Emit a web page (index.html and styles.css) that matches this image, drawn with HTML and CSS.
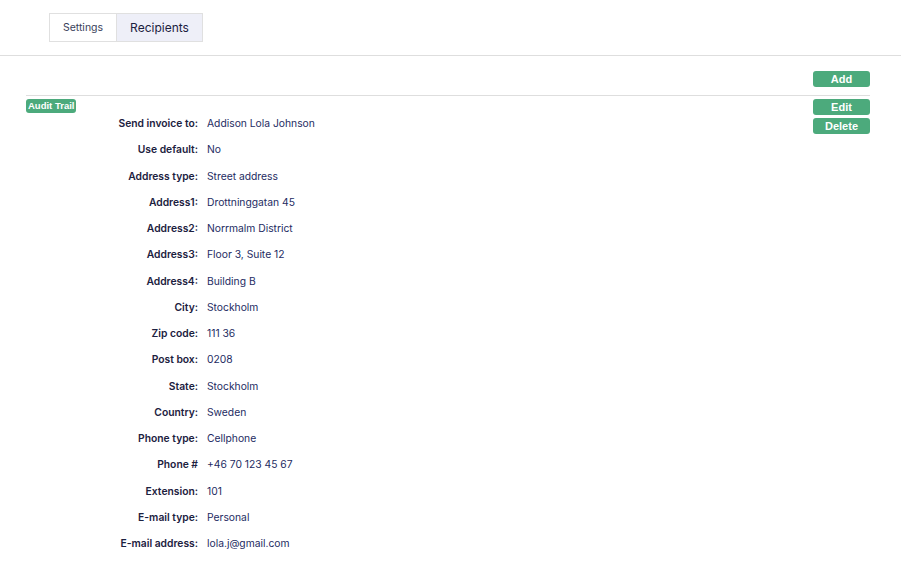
FILE: index.html
```html
<!DOCTYPE html>
<html lang="en">
<head>
<meta charset="UTF-8">
<title>Recipients</title>
<link rel="stylesheet" href="styles.css">
</head>
<body>
    <div class="tabs-bar">
        <div class="tabs">
            <div class="tab">Settings</div>
            <div class="tab active">Recipients</div>
        </div>
    </div>

    <div class="content">
        <div class="toolbar">
            <button type="button" class="btn">Add</button>
        </div>

        <div class="record">
            <div class="record-main">
                <span class="badge">Audit Trail</span>
                <dl class="details">
                    <dt>Send invoice to:</dt><dd>Addison Lola Johnson</dd>
                    <dt>Use default:</dt><dd>No</dd>
                    <dt>Address type:</dt><dd>Street address</dd>
                    <dt>Address1:</dt><dd>Drottninggatan 45</dd>
                    <dt>Address2:</dt><dd>Norrmalm District</dd>
                    <dt>Address3:</dt><dd>Floor 3, Suite 12</dd>
                    <dt>Address4:</dt><dd>Building B</dd>
                    <dt>City:</dt><dd>Stockholm</dd>
                    <dt>Zip code:</dt><dd>111 36</dd>
                    <dt>Post box:</dt><dd>0208</dd>
                    <dt>State:</dt><dd>Stockholm</dd>
                    <dt>Country:</dt><dd>Sweden</dd>
                    <dt>Phone type:</dt><dd>Cellphone</dd>
                    <dt>Phone #</dt><dd>+46 70 123 45 67</dd>
                    <dt>Extension:</dt><dd>101</dd>
                    <dt>E-mail type:</dt><dd>Personal</dd>
                    <dt>E-mail address:</dt><dd>lola.j@gmail.com</dd>
                </dl>
            </div>
            <div class="record-actions">
                <button type="button" class="btn">Edit</button>
                <button type="button" class="btn">Delete</button>
            </div>
        </div>
    </div>
</body>
</html>
```

FILE: styles.css
```css
body {
    margin: 0;
    background: #fff;
    font-family: Inter, "Noto Sans", sans-serif;
    color: #1c2140;
}

.tabs-bar {
    height: 56px;
    border-bottom: 1px solid #dedede;
    box-sizing: border-box;
    padding: 13px 0 0 49px;
}

.tabs {
    display: flex;
    height: 29px;
    width: 154px;
    border: 1px solid #e0e0e0;
    box-sizing: border-box;
}

.tab {
    display: flex;
    align-items: center;
    justify-content: center;
    font-size: 10.5px;
    color: #3a3f5c;
    width: 66px;
}

.tab.active {
    flex: 1;
    background: #eeeff8;
    border-left: 1px solid #e0e0e0;
    font-size: 12px;
    color: #1c2140;
}

.content {
    padding: 15px 31px 0 26px;
}

.toolbar {
    display: flex;
    justify-content: flex-end;
    padding-bottom: 8px;
    border-bottom: 1px solid #dedede;
}

.btn {
    width: 57px;
    height: 16px;
    padding: 0;
    border: none;
    border-radius: 3px;
    background: #4caa7c;
    color: #fff;
    font-family: "Liberation Sans", Arial, sans-serif;
    font-weight: bold;
    font-size: 11px;
    line-height: 16px;
}

.record {
    display: flex;
    padding-top: 3px;
}

.record-main {
    flex: 1;
}

.badge {
    display: inline-block;
    height: 14px;
    line-height: 14px;
    padding: 0 2px;
    border-radius: 3px;
    background: #4caa7c;
    color: #fff;
    font-family: "Liberation Sans", Arial, sans-serif;
    font-weight: bold;
    font-size: 9.5px;
    vertical-align: top;
}

.details {
    display: grid;
    grid-template-columns: 172px auto;
    column-gap: 9px;
    margin: -9px 0 0;
    font-size: 10.3px;
}

.details dt,
.details dd {
    margin: 0;
    height: 26.25px;
    line-height: 26.25px;
}

.details dt {
    text-align: right;
    font-weight: 600;
    color: #1c2140;
}

.details dd {
    color: #242b62;
}

.record-actions {
    display: flex;
    flex-direction: column;
    gap: 3px;
}
```
